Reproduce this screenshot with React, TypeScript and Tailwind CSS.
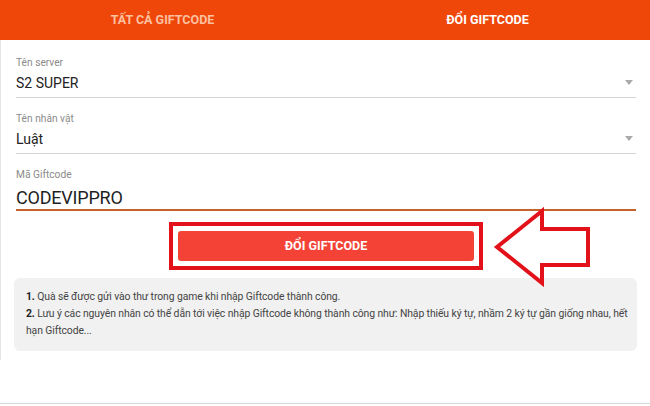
import { ReactNode } from "react";

const font = { fontFamily: "Roboto, 'Noto Sans', Arial, sans-serif" };

function Caret() {
  return (
    <svg width="8" height="5" viewBox="0 0 8 5" className="mr-[3px] mb-[2px]">
      <path d="M0 0 L8 0 L4 5 Z" fill="#a9a9a9" />
    </svg>
  );
}

function Field({
  label,
  children,
  select,
  focused,
}: {
  label: string;
  children: ReactNode;
  select?: boolean;
  focused?: boolean;
}) {
  return (
    <div
      className={
        focused
          ? "pt-[14px] border-b-2 border-[#c4622c]"
          : "pt-[14px] pb-[4px] border-b border-[#d4d4d4]"
      }
    >
      <div className="text-[10.2px] leading-[14px] text-[#8a8a8a]">{label}</div>
      <div
        className={
          focused
            ? "mt-[5px] text-[18px] leading-[22px] text-[#1f1f1f] tracking-[-0.2px]"
            : "mt-[3px] flex items-center justify-between text-[14px] leading-[20px] text-[#222]"
        }
      >
        <span>{children}</span>
        {select && <Caret />}
      </div>
    </div>
  );
}

export default function App() {
  return (
    <div
      className="relative w-[650px] h-[406px] bg-white flex flex-col overflow-hidden"
      style={font}
    >
      <header className="h-[40px] flex bg-[#ef4709] text-[12.5px] font-bold">
        <div className="flex-1 flex items-center justify-center text-[#fcc0a0]">
          TẤT CẢ GIFTCODE
        </div>
        <div className="flex-1 flex items-center justify-center text-white">
          ĐỔI GIFTCODE
        </div>
      </header>

      <main className="border-l border-[#e4e4e4] pl-[15px] pr-[14px] pt-[2px] pb-[9px]">
        <Field label="Tên server" select>
          S2 SUPER
        </Field>
        <Field label="Tên nhân vật" select>
          Luật
        </Field>
        <Field label="Mã Giftcode" focused>
          CODEVIPPRO
        </Field>

        <div className="mt-[11px] flex justify-center">
          <div className="border-4 border-[#e3121a] p-[5px]">
            <button className="w-[296px] h-[30px] rounded-[3px] bg-[#f44336] text-white text-[12.5px] font-bold">
              ĐỔI GIFTCODE
            </button>
          </div>
        </div>

        <div className="mt-[8px] -ml-[2px] -mr-[1px] rounded-[6px] bg-[#f1f1f1] pl-[12px] pr-[8px] pt-[10px] pb-[12px] text-[10.4px] tracking-[-0.1px] leading-[17px] text-[#444]">
          <p>
            <b className="text-[#222]">1.</b> Quà sẽ được gửi vào thư trong game khi nhập Giftcode thành công.
          </p>
          <p>
            <b className="text-[#222]">2.</b> Lưu ý các nguyên nhân có thể dẫn tới việc nhập Giftcode không thành công
            như: Nhập thiếu ký tự, nhầm 2 ký tự gần giống nhau, hết hạn Giftcode...
          </p>
        </div>
      </main>

      <div className="mt-auto mb-[2px] h-px bg-[#d6d6d6]" />

      <svg
        className="absolute left-[493px] top-[207px]"
        width="100"
        height="80"
        viewBox="0 0 100 80"
      >
        <path
          d="M4 40 L49 4 L49 22 L95 22 L95 58 L49 58 L49 76 Z"
          fill="white"
          stroke="#e3121a"
          strokeWidth="4"
          strokeLinejoin="miter"
        />
      </svg>
    </div>
  );
}
